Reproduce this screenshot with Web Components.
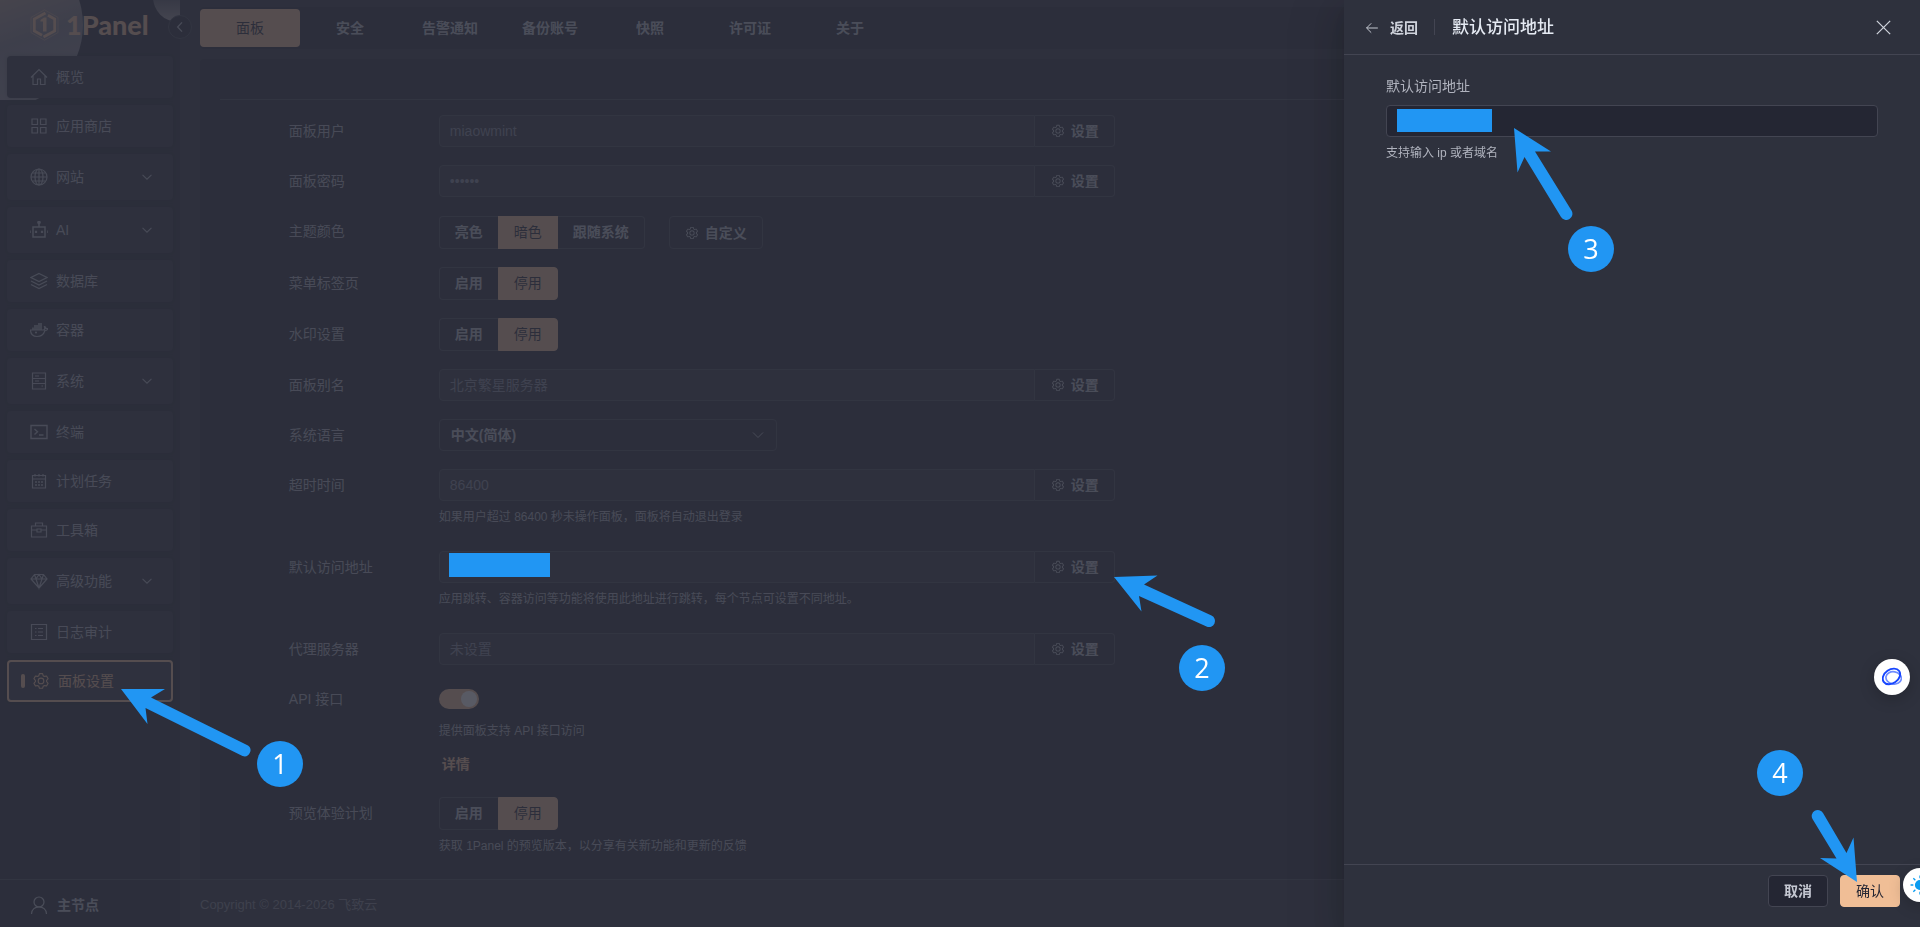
<!DOCTYPE html>
<html lang="zh-CN">
<head>
<meta charset="utf-8">
<title>1Panel</title>
<style>
html, body { margin: 0; }
body {
  --page: #2e313d; --card: #242633; --line: #434552; --primary: #f0be96;
  --text: #adb0bc; --strong: #bbbfc8; --muted: #84869a; --mark: #2196f3;
  position: relative; overflow: hidden; min-height: 100vh;
  background: var(--page); color: var(--text);
  font: 14px/20px "Liberation Sans", "Noto Sans CJK SC", sans-serif;
}
step-badge, step-arrow, mask-block { position: absolute; z-index: 10; }
#b1 { left: 257px; top: 741px; } #a1 { left: 121px; top: 687px; }
#b2 { left: 1179px; top: 645px; } #a2 { left: 1114px; top: 573px; }
#b3 { right: 306px; top: 226px; } #a3 { right: 346px; top: 126px; }
#b4 { right: 117px; top: 750px; } #a4 { right: 60px; top: 809px; }
#address-mask { left: 449px; top: 553px; width: 101px; height: 24px; }
float-bubble { position: absolute; z-index: 9; }
#assist { right: 10px; top: 659px; }
#sun { right: -17px; top: 868px; }
</style>
</head>
<body>
<app-shell>
  <side-nav slot="nav"></side-nav>
  <tab-bar></tab-bar>
  <settings-page></settings-page>
  <page-footer></page-footer>
</app-shell>
<side-drawer></side-drawer>
<float-bubble id="assist" size="36" icon="planet"></float-bubble>
<float-bubble id="sun" size="34" icon="sun"></float-bubble>
<mask-block id="address-mask"></mask-block>
<step-arrow id="a1" w="132" h="72" d="M0 2H44L30 10.500L127 58.500A6 6 0 0 1 121.500 69L24.500 21L26.500 37Z"></step-arrow>
<step-badge id="b1">1</step-badge>
<step-arrow id="a2" w="104" h="56" d="M0 4L43.500 2.500L30 11.500L97.500 42.500A6 6 0 0 1 92.500 53.500L25 23L27.500 38.500Z"></step-arrow>
<step-badge id="b2">2</step-badge>
<step-arrow id="a3" w="60" h="96" d="M0 2L37 25.500H21L57.500 84.500A6 6 0 0 1 47 91L10.500 31L3.500 46.500Z"></step-arrow>
<step-badge id="b3">3</step-badge>
<step-arrow id="a4" w="50" h="76" d="M47 73L10 49L26.500 49.500L2.500 10A6 6 0 0 1 13 4L36.500 44L43.500 28.500Z"></step-arrow>
<step-badge id="b4">4</step-badge>

<script>
const define = (name, render) => customElements.define(name, class extends HTMLElement {
  connectedCallback() {
    if (this.shadowRoot) return;
    this.attachShadow({ mode: "open" }).innerHTML =
      "<style>*{box-sizing:border-box}button,input,select{font:inherit;color:inherit;margin:0}</style>" + render(this);
  }
});

const ICONS = {
  home: '<path d="M1 9.500L9 1.500L17 9.500M3 8V16.500H7.500V11H10.500V16.500H15V8"/>',
  apps: '<path d="M2 2H7.500V7.500H2ZM10.500 2H16V7.500H10.500ZM2 10.500H7.500V16H2ZM10.500 10.500H16V16H10.500Z"/>',
  globe: '<circle cx="9" cy="9" r="8"/><ellipse cx="9" cy="9" rx="4" ry="8"/><path d="M9 1V17M1 9H17M2.500 5H15.500M2.500 13H15.500"/>',
  robot: '<g stroke-width="1.500"><path d="M3 6H15V16H3ZM9 6V2M0 9.500V12M18 9.500V12"/></g><circle cx="9" cy="1.500" r="1.200" fill="currentColor"/><path d="M6 9.800V12M12 9.800V12" stroke-width="2.200"/>',
  layers: '<path d="M9 1.500L17 5.500L9 9.500L1 5.500ZM1 9L9 13L17 9M1 12.500L9 16.500L17 12.500"/>',
  docker: '<path d="M.500 9H13C15 9 15 7.500 14.500 5.500C15.500 5.500 16 6.500 16 7.500H18C17.500 9 16 9.500 15 9.500C13.500 14 10.500 15.500 7 15.500C3 15.500 .500 13 .500 9Z"/><path d="M3 6.500V9M5 4V9M7 4V9M9 2V9M11 2V9" stroke-width="1.500"/><circle cx="6" cy="11.500" r=".5"/>',
  server: '<path d="M2.500 1H15.500V17H2.500ZM2.500 6.500H15.500M2.500 11.500H15.500M5 4H9M5 9H9M11.500 14H13"/>',
  terminal: '<path d="M1 2.500H17V15.500H1ZM4.500 6L7.500 8.800L4.500 11.500M9 12H13.500" stroke-width="1.400"/>',
  calendar: '<path d="M2.500 3.500H15.500V16H2.500ZM2.500 7H15.500M5 2V4.500M9 2V4.500M13 2V4.500"/><path d="M5 10H7M8 10H10M11 10H13M5 13H7M8 13H10M11 13H13" stroke-width="1.500"/>',
  toolbox: '<path d="M1.500 5H16.500V16H1.500ZM5.500 5V2H12.500V5M1.500 9H6.500M11.500 9H16.500M7 8H11V11H7Z"/>',
  gem: '<path d="M4.500 2.500H13.500L17 7L9 16L1 7ZM1 7H17M4.500 2.500L6 7L9 16L12 7L13.500 2.500M6 7L9 2.500L12 7"/>',
  log: '<path d="M1.500 1.500H16.500V16.500H1.500ZM5 5.500H6.500M8 5.500H13M5 9H6.500M8 9H13M5 12.500H6.500M8 12.500H13"/>',
  user: '<circle cx="9" cy="6" r="5"/><path d="M1.500 18C1.500 8.500 16.500 8.500 16.500 18"/>',
  down: '<path d="M4 6.500L9 11.500L14 6.500"/>',
  left: '<path d="M12 2L5.500 9L12 16"/>',
  back: '<path d="M16.500 9H2M8 3L2 9L8 15"/>',
  close: '<path d="M1 1L17 17M17 1L1 17"/>',
  gear: '<path transform="scale(.017578)" fill="currentColor" stroke="none" d="M600.704 64a32 32 0 0 1 30.464 22.208l35.2 109.376c14.784 7.232 28.928 15.36 42.432 24.512l112.384-24.192a32 32 0 0 1 34.432 15.36L944.32 364.8a32 32 0 0 1-4.032 37.504l-77.12 85.12a357.12 357.12 0 0 1 0 49.024l77.12 85.248a32 32 0 0 1 4.032 37.504l-88.704 153.6a32 32 0 0 1-34.432 15.296L708.8 803.904c-13.44 9.088-27.648 17.28-42.368 24.512l-35.264 109.376A32 32 0 0 1 600.704 960H423.296a32 32 0 0 1-30.464-22.208L357.696 828.48a351.616 351.616 0 0 1-42.56-24.64l-112.32 24.256a32 32 0 0 1-34.432-15.36L79.68 659.2a32 32 0 0 1 4.032-37.504l77.12-85.248a357.12 357.12 0 0 1 0-48.896l-77.12-85.248A32 32 0 0 1 79.68 364.8l88.704-153.6a32 32 0 0 1 34.432-15.296l112.32 24.256c13.568-9.152 27.776-17.408 42.56-24.64l35.2-109.312A32 32 0 0 1 423.232 64H600.64zm-23.424 64H446.72l-36.352 113.088-24.512 11.968a294.113 294.113 0 0 0-34.816 20.096l-22.656 15.36-116.224-25.088-65.28 113.152 79.68 88.192-1.92 27.136a293.12 293.12 0 0 0 0 40.192l1.92 27.136-79.808 88.192 65.344 113.152 116.224-25.024 22.656 15.296a294.113 294.113 0 0 0 34.816 20.096l24.512 11.968L446.72 896h130.688l36.48-113.152 24.448-11.904a288.282 288.282 0 0 0 34.752-20.096l22.592-15.296 116.288 25.024 65.28-113.152-79.744-88.192 1.92-27.136a293.12 293.12 0 0 0 0-40.256l-1.92-27.136 79.808-88.128-65.344-113.152-116.288 24.96-22.592-15.232a287.616 287.616 0 0 0-34.752-20.096l-24.448-11.904L577.344 128zM512 320a192 192 0 1 1 0 384 192 192 0 0 1 0-384m0 64a128 128 0 1 0 0 256 128 128 0 0 0 0-256"/>',
  planet: '<g fill="none"><ellipse cx="10.500" cy="9.800" rx="7" ry="5.500" transform="rotate(10 10.500 9.800)" stroke="#6f8cff" stroke-width="1.500"/><ellipse cx="8.500" cy="8.500" rx="8.500" ry="6.200" transform="rotate(-35 8.500 8.500)" stroke="#1746ff" stroke-width="1.700"/></g>',
  sun: '<g stroke="#0a9cf0" stroke-width="1.200"><circle cx="9" cy="9" r="4" fill="#0a9cf0"/><path d="M9 .500V3M9 15V17.500M.500 9H3M15 9H17.500M3 3L4.800 4.800M13.200 13.200L15 15M3 15L4.800 13.200M15 3L13.200 4.800"/></g>'
};
define("ui-icon", el => {
  const s = el.getAttribute("size") || 18;
  return `<style>:host{display:inline-flex;flex:none}svg{display:block}</style>
  <svg width="${s}" height="${s}" viewBox="0 0 18 18" fill="none" stroke="currentColor" stroke-width="${el.getAttribute("weight") || 1.2}" aria-hidden="true">${ICONS[el.getAttribute("name")]}</svg>`;
});

define("app-shell", () => `<style>
:host{display:grid;grid-template-columns:180px minmax(0,1fr);min-height:100vh}
.main{display:flex;flex-direction:column;padding:7px 20px 0}
</style><slot name="nav"></slot><div class="main"><slot></slot></div>`);

define("brand-logo", () => `<style>
:host{display:flex;align-items:center;gap:7px;height:49px;padding:0 0 0 30px;color:var(--primary);position:relative}
b{font:900 27px/32px Lato,sans-serif}
</style>
<svg width="29" height="32" viewBox="0 0 29 32" fill="none" stroke="currentColor" aria-hidden="true">
<path d="M14.500 .800L28 8.400V23.600L14.500 31.200L1 23.600V8.400Z" stroke-width=".7" opacity=".6"/>
<path d="M15.500 4L4.300 10V22L12 26.300M13.500 28L24.700 22V10L18 6.200" stroke-width="2.800"/>
<path d="M10.500 11L14 8.500H16.500V22.500H13V12.500H10.500Z" fill="currentColor" stroke="none"/></svg>
<b>1Panel</b>`);

define("nav-item", el => {
  const on = el.hasAttribute("active"), sub = el.hasAttribute("sub");
  return `<style>
:host{display:block}
a{display:flex;align-items:center;gap:8px;height:${sub ? 46 : 42}px;padding:0 18px 0 23px;border-radius:4px;background:#2d303c;color:var(--text);text-decoration:none;box-shadow:0 0 4px rgba(0,0,0,.25)}
.t{flex:1}
a.on{border:2px solid var(--primary);background:#323542;color:var(--primary);padding-left:12px}
i{width:4px;height:14px;border-radius:2px;background:var(--primary);margin-right:-1px}
</style><a href="#" class="${on ? "on" : ""}">${on ? "<i></i>" : ""}<ui-icon name="${el.getAttribute("icon")}"></ui-icon><span class="t"><slot></slot></span>${sub ? '<ui-icon name="down" size="16"></ui-icon>' : ""}</a>`;
});

define("side-nav", () => `<style>
:host{display:flex;flex-direction:column;position:relative;background:var(--card)}
.glow{position:absolute;inset:0 0 auto 0;height:100px;overflow:hidden}
.glow::before,.glow::after{content:"";position:absolute;border-radius:50%}
.glow::before{left:-83px;top:-58px;width:166px;height:166px;background:linear-gradient(160deg,#b59a8c 30%,#7b7983 60%,#8d8b98 100%)}
.glow::after{left:153px;top:-28px;width:50px;height:50px;background:linear-gradient(#4a4b58 45%,#a09a9e)}
nav{display:flex;flex-direction:column;gap:7px;padding:7px;position:relative;flex:1}
.fold{position:absolute;right:-12px;top:15px;width:24px;height:24px;padding:0;border-radius:50%;border:1px solid var(--line);background:var(--card);color:var(--text);display:grid;place-items:center;z-index:1}
.node{position:relative;display:flex;align-items:center;gap:9px;height:48px;padding:2px 0 0 30px;border:0;border-top:1px solid var(--line);background:none;color:var(--strong);font-weight:600;text-align:left}
</style>
<div class="glow"></div>
<brand-logo></brand-logo>
<nav>
<nav-item icon="home">概览</nav-item>
<nav-item icon="apps">应用商店</nav-item>
<nav-item icon="globe" sub>网站</nav-item>
<nav-item icon="robot" sub>AI</nav-item>
<nav-item icon="layers">数据库</nav-item>
<nav-item icon="docker">容器</nav-item>
<nav-item icon="server" sub>系统</nav-item>
<nav-item icon="terminal">终端</nav-item>
<nav-item icon="calendar">计划任务</nav-item>
<nav-item icon="toolbox">工具箱</nav-item>
<nav-item icon="gem" sub>高级功能</nav-item>
<nav-item icon="log">日志审计</nav-item>
<nav-item icon="gear" active>面板设置</nav-item>
</nav>
<button class="node"><ui-icon name="user"></ui-icon>主节点</button>
<button class="fold" aria-label="收起"><ui-icon name="left" size="12" weight="2"></ui-icon></button>`);

define("tab-bar", () => `<style>
:host{display:flex;padding:2px 0;background:var(--card);border-radius:4px;margin-bottom:10px}
button{width:100px;height:38px;padding:0;border:0;border-radius:4px;background:none;color:var(--strong);font-weight:600}
.on{background:var(--primary);color:#242633;font-weight:400}
</style><button class="on">面板</button>${["安全", "告警通知", "备份账号", "快照", "许可证", "关于"].map(t => `<button>${t}</button>`).join("")}`);

const radioGroup = (name, items, on) => `<div class="radios" role="radiogroup" aria-label="${name}">${items.map((t, i) =>
  `<label><input type="radio" name="r"${i === on ? " checked" : ""}><span>${t}</span></label>`).join("")}</div>`;

define("form-row", el => {
  const a = n => el.getAttribute(n), kind = a("kind") || "input", label = a("label");
  let body = "";
  if (kind === "input") body = `<div class="group"><input id="c" type="${a("type") || "text"}" value="${a("value") || ""}" disabled><button class="btn"><ui-icon name="gear" size="14"></ui-icon>设置</button></div>`;
  if (kind === "select") body = `<div class="select"><select id="c"><option>${a("value")}</option></select><ui-icon name="down" size="18" weight="1"></ui-icon></div>`;
  if (kind === "radio") body = `<div class="line">${radioGroup(label, a("options").split(","), +a("on"))}${a("extra") ? `<button class="btn solo"><ui-icon name="gear" size="14"></ui-icon>${a("extra")}</button>` : ""}</div>`;
  if (kind === "switch") body = `<div class="sw"><input id="c" type="checkbox" role="switch" checked></div>`;
  return `<style>
:host{display:grid;grid-template-columns:150px minmax(0,1fr);margin-bottom:18px}
:host(:last-child){margin-bottom:8px}
.name{line-height:32px}
.group{display:flex;height:32px}
.group input{flex:1;min-width:0;padding:0 10px;border:1px solid var(--line);border-radius:4px 0 0 4px;background:#2e303c;color:var(--muted)}
.btn{display:flex;align-items:center;justify-content:flex-end;gap:6px;width:80px;padding:0 15px;border:1px solid var(--line);border-left:0;border-radius:0 4px 4px 0;background:none;color:var(--strong);font-weight:600}
.solo{width:94px;border-left:1px solid var(--line);border-radius:4px}
.select{position:relative;width:50%}
select{appearance:none;display:block;width:100%;height:32px;padding:0 11px;border:1px solid var(--line);border-radius:4px;background:none;color:var(--strong);font-weight:600}
.select ui-icon{position:absolute;right:10px;top:7px}
.line{display:flex;gap:24px;height:33px}
.radios{display:flex}
.radios label{position:relative}
.radios input{position:absolute;inset:0;opacity:0}
.radios span{display:block;height:33px;line-height:31px;padding:0 15px;border:1px solid var(--line);border-width:1px 0;font-weight:600;color:var(--strong)}
.radios label:first-of-type span{border-left-width:1px;border-radius:4px 0 0 4px}
.radios label:last-of-type span{border-right-width:1px;border-radius:0 4px 4px 0}
.radios input:checked + span{background:var(--primary);border-color:var(--primary);color:#242633;border-width:1px;font-weight:400}
.sw{height:32px;display:flex;align-items:center}
.sw input{appearance:none;width:40px;height:20px;border-radius:10px;background:var(--primary);display:flex;justify-content:flex-end;padding:2px}
.sw input::before{content:"";width:16px;height:16px;border-radius:50%;background:#fff}
.hint{font-size:12px;line-height:32px;color:var(--text)}
a{display:block;padding-left:3px;line-height:34px;height:32px;color:var(--primary);font-weight:600;text-decoration:none}
:host([tall]) .line{padding-top:1px;height:34px}
</style>
${kind === "radio" ? `<span class="name">${label}</span>` : `<label class="name" for="c">${label}</label>`}
<div>${body}${a("hint") ? `<div class="hint">${a("hint")}</div>` : ""}${a("link") ? `<a href="#">${a("link")}</a>` : ""}</div>`;
});

define("settings-page", () => `<style>
:host{display:block;flex:1;padding:0 28px 0 20px;background:var(--card);border-radius:4px 4px 0 0}
.top{height:41px;border-bottom:1px solid var(--line);margin-bottom:15px}
.grid{display:grid;grid-template-columns:1fr 12fr 11fr}
form{grid-column:2;min-width:0}
</style>
<div class="top"></div>
<div class="grid"><form>
<form-row label="面板用户" value="miaowmint"></form-row>
<form-row label="面板密码" type="password" value="secret"></form-row>
<form-row label="主题颜色" kind="radio" options="亮色,暗色,跟随系统" on="1" extra="自定义" tall></form-row>
<form-row label="菜单标签页" kind="radio" options="启用,停用" on="1"></form-row>
<form-row label="水印设置" kind="radio" options="启用,停用" on="1"></form-row>
<form-row label="面板别名" value="北京繁星服务器"></form-row>
<form-row label="系统语言" kind="select" value="中文(简体)"></form-row>
<form-row label="超时时间" value="86400" hint="如果用户超过 86400 秒未操作面板，面板将自动退出登录"></form-row>
<form-row label="默认访问地址" hint="应用跳转、容器访问等功能将使用此地址进行跳转，每个节点可设置不同地址。"></form-row>
<form-row label="代理服务器" value="未设置"></form-row>
<form-row label="API 接口" kind="switch" hint="提供面板支持 API 接口访问" link="详情"></form-row>
<form-row label="预览体验计划" kind="radio" options="启用,停用" on="1" hint="获取 1Panel 的预览版本，以分享有关新功能和更新的反馈"></form-row>
</form></div>`);

define("page-footer", () => `<style>
:host{display:flex;align-items:center;box-sizing:border-box;height:48px;margin:0 -20px;padding:2px 20px 0;border-top:1px solid var(--line);font-size:13px;color:#7c7f8c}
</style>Copyright © 2014-2026 飞致云`);

define("mask-block", () => `<style>:host{display:block;background:var(--mark)}</style>`);

define("side-drawer", () => `<style>
:host{position:fixed;inset:0;z-index:5;display:flex;justify-content:flex-end;background:rgba(46,49,61,.8)}
section{width:30%;display:flex;flex-direction:column;background:var(--page);box-shadow:0 16px 48px 16px rgba(0,0,0,.08),0 12px 32px rgba(0,0,0,.12),0 8px 16px -8px rgba(0,0,0,.16)}
header{display:flex;align-items:center;height:55px;padding:0 29px 0 21px;border-bottom:1px solid #434552}
button{padding:0;border:0;background:none;display:flex;align-items:center}
.back{gap:11px;font-weight:600;color:#cfd3dc;padding-top:1px}
hr{width:1px;height:16px;border:0;margin:0 17px 0 16px;background:var(--line)}
h1{margin:0;padding-top:1px;flex:1;font:500 17px/24px "Liberation Sans","Noto Sans CJK SC",sans-serif;color:#e5eaf3}
.x{color:#cfd3dc}
.body{flex:1;padding:20px 42px}
label{display:block;line-height:22px;margin-bottom:8px;color:#b0b3be}
.field{position:relative}
input{display:block;width:100%;height:32px;padding:0 11px;border:1px solid var(--line);border-radius:4px;background:#242633}
mask-block{position:absolute;left:11px;top:4px;width:95px;height:23px}
p{margin:0;font-size:12px;line-height:32px;color:#b0b3be}
footer{display:flex;justify-content:flex-end;gap:12px;height:63px;padding:10px 20px 0;border-top:1px solid var(--line)}
footer button{justify-content:center;width:60px;height:32px;border:1px solid var(--line);border-radius:4px;background:#242633;color:#c5c8d2;font-weight:600}
footer .ok{background:var(--primary);border-color:var(--primary);color:#242633;font-weight:400}
</style>
<section role="dialog" aria-labelledby="t">
<header><button class="back"><ui-icon name="back" size="14"></ui-icon>返回</button><hr><h1 id="t">默认访问地址</h1><button class="x" aria-label="关闭"><ui-icon name="close" size="15" weight="1.500"></ui-icon></button></header>
<div class="body"><label for="addr">默认访问地址</label><div class="field"><input id="addr" type="text"><mask-block></mask-block></div><p>支持输入 ip 或者域名</p></div>
<footer><button>取消</button><button class="ok">确认</button></footer>
</section>`);

define("step-badge", () => `<style>
:host{display:grid;place-items:center;width:46px;height:46px;border-radius:50%;background:var(--mark);color:#fff;font:27px/46px "Open Sans",sans-serif}
</style><slot></slot>`);

define("step-arrow", el => {
  const w = el.getAttribute("w"), h = el.getAttribute("h");
  return `<style>:host{display:block;pointer-events:none}svg{display:block;fill:var(--mark)}</style>
  <svg width="${w}" height="${h}" viewBox="0 0 ${w} ${h}" aria-hidden="true"><path d="${el.getAttribute("d")}"/></svg>`;
});

define("float-bubble", el => `<style>
:host{display:grid;place-items:center;width:${el.getAttribute("size")}px;height:${el.getAttribute("size")}px;border-radius:50%;background:#fff;box-shadow:0 4px 16px rgba(0,0,0,.2)}
</style><ui-icon name="${el.getAttribute("icon")}" size="20"></ui-icon>`);
</script>
</body>
</html>
